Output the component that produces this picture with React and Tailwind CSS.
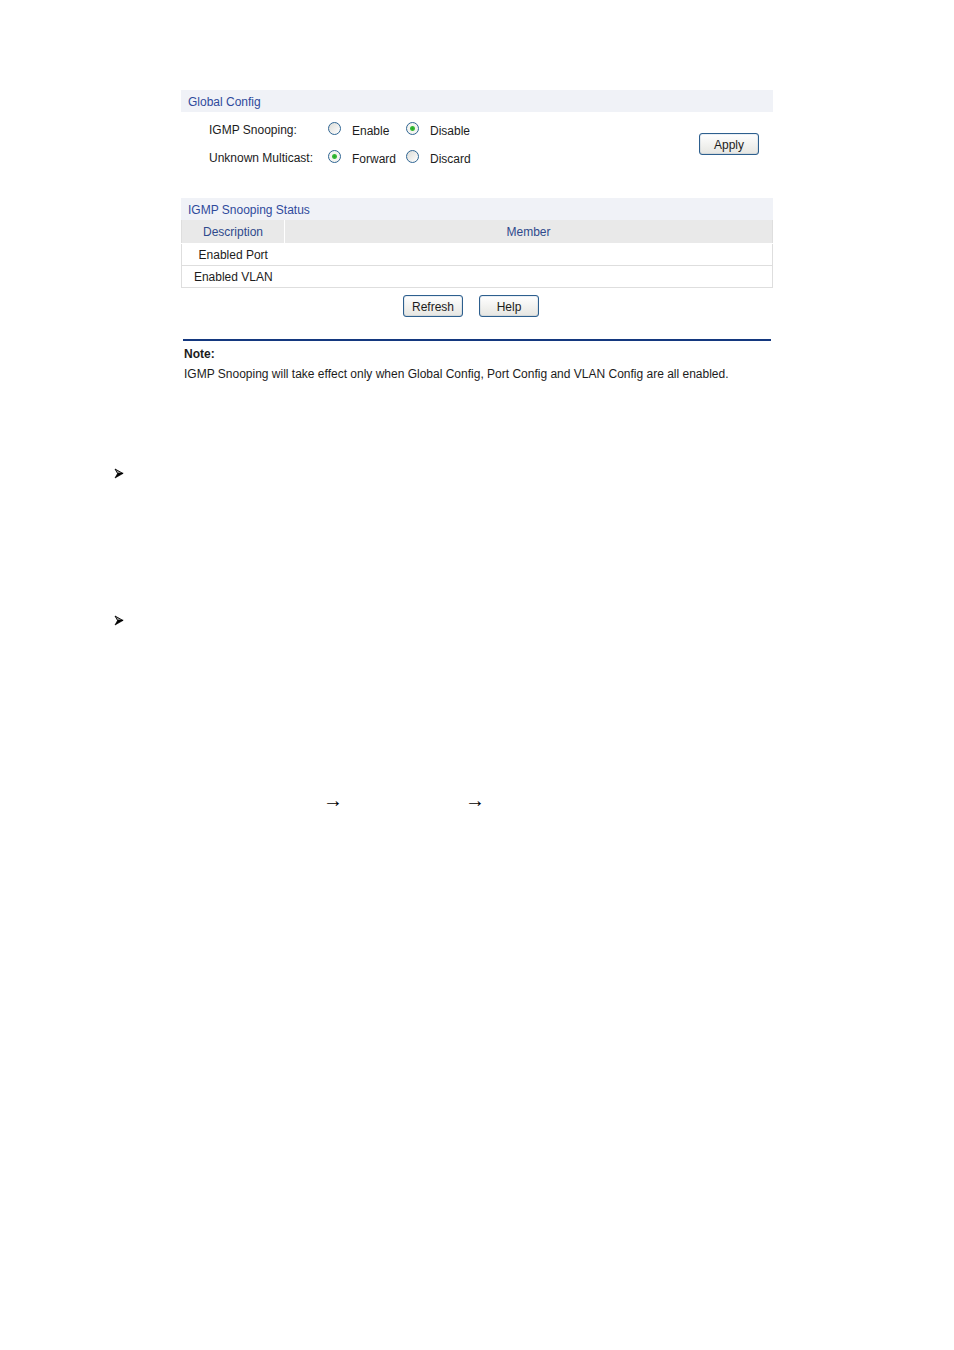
import React, { useState } from 'react';

const statusRows = ['Enabled Port', 'Enabled VLAN'];

export default function App() {
  const [snooping, setSnooping] = useState('Disable');
  const [multicast, setMulticast] = useState('Forward');

  return (
    <main className="min-h-screen bg-white px-[114px] pt-[90px] pb-12 font-['Liberation_Sans',Arial,sans-serif] text-[12px] leading-4 text-[#1c1c1c]">
      <div className="mx-[67px]">
        {/* Global Config */}
        <section>
          <SectionTitle>Global Config</SectionTitle>
          <form
            className="flex items-center justify-between pt-1 pr-[14px] pl-7"
            onSubmit={(e) => e.preventDefault()}
          >
            <div>
              <RadioRow
                label="IGMP Snooping:"
                name="snooping"
                options={['Enable', 'Disable']}
                value={snooping}
                onChange={setSnooping}
              />
              <RadioRow
                label="Unknown Multicast:"
                name="multicast"
                options={['Forward', 'Discard']}
                value={multicast}
                onChange={setMulticast}
              />
            </div>
            <Button>Apply</Button>
          </form>
        </section>

        {/* IGMP Snooping Status */}
        <section className="mt-[26px]">
          <SectionTitle>IGMP Snooping Status</SectionTitle>
          <table className="w-full table-fixed border-collapse border-x border-b border-[#dedede] text-center">
            <thead>
              <tr className="h-[23px] border-b border-white bg-[#e9e9e9] text-[#2f4a8c]">
                <th scope="col" className="w-[103px] border-r border-white p-0 pt-px font-normal">Description</th>
                <th scope="col" className="p-0 pt-px font-normal">Member</th>
              </tr>
            </thead>
            <tbody>
              {statusRows.map((name) => (
                <tr key={name} className="h-[22px] border-b border-[#dedede]">
                  <td className="p-0 pt-px">{name}</td>
                  <td className="p-0"></td>
                </tr>
              ))}
            </tbody>
          </table>
          <div className="mt-[7px] flex justify-center gap-4 pr-3">
            <Button>Refresh</Button>
            <Button>Help</Button>
          </div>
        </section>

        <section className="mx-[2px] mt-[22px] border-t-2 border-[#14387f] pt-[5px]">
          <h3 className="px-px font-bold">Note:</h3>
          <p className="mt-1 px-px">
            IGMP Snooping will take effect only when Global Config, Port Config and VLAN Config are all enabled.
          </p>
        </section>
      </div>

      <ul className="mt-[86px] space-y-[136px]">
        <li><Arrowhead /></li>
        <li><Arrowhead /></li>
      </ul>

      <p className="mt-[166px] ml-[209px] flex gap-[122px] font-['Liberation_Serif',serif] text-[20px] leading-4 text-black">
        <span>→</span>
        <span>→</span>
      </p>
    </main>
  );
}

const SectionTitle = ({ children }) => (
  <h2 className="h-[22px] bg-[#f0f2f7] px-[7px] leading-6 text-[#2f4a9c]">{children}</h2>
);

const RadioRow = ({ label, name, options, value, onChange }) => (
  <fieldset className="flex h-7 items-center" aria-label={label}>
    <span className="w-[119px]">{label}</span>
    {options.map((option) => (
      <label key={option} className="flex w-[78px] items-center gap-[11px] pt-px">
        <input
          type="radio"
          name={name}
          value={option}
          checked={value === option}
          onChange={() => onChange(option)}
          className="mb-1 size-[13px] shrink-0 appearance-none rounded-full border border-[#2f6593] bg-[linear-gradient(135deg,#dcdcd7,#ffffff)] checked:bg-[radial-gradient(circle,#22a822_0px,#3cbb3c_2px,#f4f4f0_3px)]"
        />
        {option}
      </label>
    ))}
  </fieldset>
);

const Button = ({ children }) => (
  <button
    type="button"
    className="h-[22px] w-[60px] rounded-[3px] border border-[#2d5f8e] bg-linear-to-b from-white to-[#e6e6e2] pt-[2px] shadow-[inset_0_0_1px_#2d5f8e]"
  >
    {children}
  </button>
);

const Arrowhead = () => (
  <svg className="block" width="11" height="11" viewBox="0 0 11 11" aria-hidden="true">
    <path d="M1 1 L9 5.5 L3.6 5.5 Z" fill="#999" stroke="#000" strokeWidth="0.9" />
    <path d="M9.2 5.3 L1 10 L3.6 5.4 Z" fill="#000" stroke="#000" strokeWidth="0.7" />
  </svg>
);
